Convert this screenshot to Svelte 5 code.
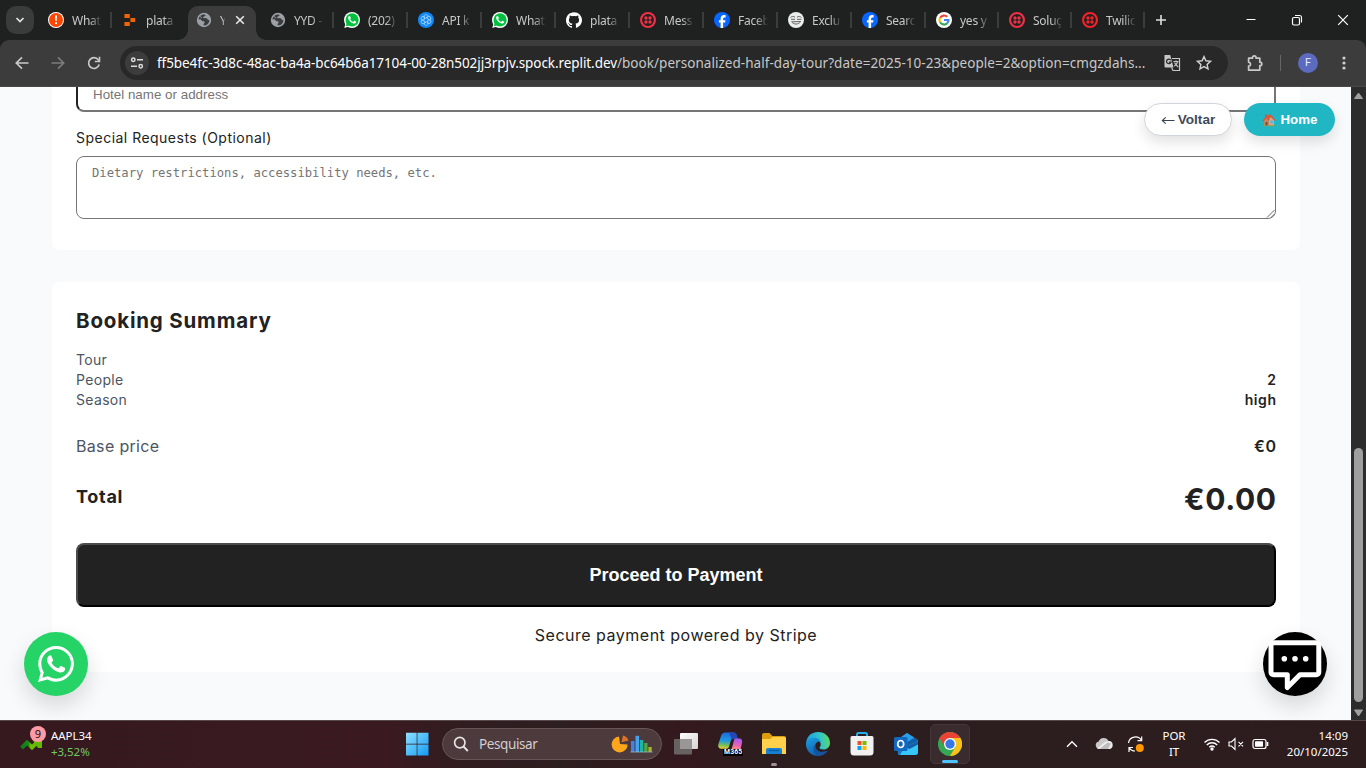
<script>
  const tabs = [
    { icon: 'alert', label: 'What', sep: true },
    { icon: 'replit', label: 'plata', sep: false },
    { icon: 'globe', label: 'Y', active: true },
    { icon: 'globe', label: 'YYD -', sep: true },
    { icon: 'whatsapp', label: '(202)', sep: true },
    { icon: 'openai', label: 'API k', sep: true },
    { icon: 'whatsapp', label: 'What', sep: true },
    { icon: 'github', label: 'plata', sep: true },
    { icon: 'twilio', label: 'Mess', sep: true },
    { icon: 'facebook', label: 'Faceb', sep: true },
    { icon: 'face', label: 'Exclu', sep: true },
    { icon: 'facebook', label: 'Searc', sep: true },
    { icon: 'google', label: 'yes y', sep: true },
    { icon: 'twilio', label: 'Soluç', sep: true },
    { icon: 'twilio2', label: 'Twilic', sep: true }
  ];
  const rows = [
    { name: 'Tour', value: '' },
    { name: 'People', value: '2' },
    { name: 'Season', value: 'high' }
  ];
  const wa =
    'M17.472 14.382c-.297-.149-1.758-.867-2.03-.967-.273-.099-.471-.148-.67.15-.197.297-.767.966-.94 1.164-.173.199-.347.223-.644.075-.297-.15-1.255-.463-2.39-1.475-.883-.788-1.48-1.761-1.653-2.059-.173-.297-.018-.458.13-.606.134-.133.298-.347.446-.52.149-.174.198-.298.298-.497.099-.198.05-.371-.025-.52-.075-.149-.669-1.612-.916-2.207-.242-.579-.487-.5-.669-.51-.173-.008-.371-.01-.57-.01-.198 0-.52.074-.792.372-.272.297-1.04 1.016-1.04 2.479 0 1.462 1.065 2.875 1.213 3.074.149.198 2.096 3.2 5.077 4.487.709.306 1.262.489 1.694.625.712.227 1.36.195 1.871.118.571-.085 1.758-.719 2.006-1.413.248-.694.248-1.289.173-1.413-.074-.124-.272-.198-.57-.347m-5.421 7.403h-.004a9.87 9.87 0 01-5.031-1.378l-.361-.214-3.741.982.998-3.648-.235-.374a9.86 9.86 0 01-1.51-5.26c.001-5.45 4.436-9.884 9.888-9.884 2.64 0 5.122 1.03 6.988 2.898a9.825 9.825 0 012.893 6.994c-.003 5.45-4.437 9.884-9.885 9.884m8.413-18.297A11.815 11.815 0 0012.05 0C5.495 0 .16 5.335.157 11.892c0 2.096.547 4.142 1.588 5.945L.057 24l6.305-1.654a11.882 11.882 0 005.683 1.448h.005c6.554 0 11.89-5.335 11.893-11.893a11.821 11.821 0 00-3.48-8.413z';
  const gh =
    'M12 .297c-6.63 0-12 5.373-12 12 0 5.303 3.438 9.8 8.205 11.385.6.113.82-.258.82-.577 0-.285-.01-1.04-.015-2.04-3.338.724-4.042-1.61-4.042-1.61C4.422 18.07 3.633 17.7 3.633 17.7c-1.087-.744.084-.729.084-.729 1.205.084 1.838 1.236 1.838 1.236 1.07 1.835 2.809 1.305 3.495.998.108-.776.417-1.305.76-1.605-2.665-.3-5.466-1.332-5.466-5.93 0-1.31.465-2.38 1.235-3.22-.135-.303-.54-1.523.105-3.176 0 0 1.005-.322 3.3 1.23.96-.267 1.98-.399 3-.405 1.02.006 2.04.138 3 .405 2.28-1.552 3.285-1.23 3.285-1.23.645 1.653.24 2.873.12 3.176.765.84 1.23 1.91 1.23 3.22 0 4.61-2.805 5.625-5.475 5.92.42.36.81 1.096.81 2.22 0 1.606-.015 2.896-.015 3.286 0 .315.21.69.825.57C20.565 22.092 24 17.592 24 12.297c0-6.627-5.373-12-12-12';
</script>

{#snippet favicon(kind)}
  <svg class="fav" viewBox="0 0 16 16">
    {#if kind === 'alert'}
      <circle cx="8" cy="8" r="8" fill="#fff" /><circle cx="8" cy="8" r="7" fill="#ff4500" />
      <path d="M7 3.600h2L8.700 9H7.300z" fill="#fff" /><circle cx="8" cy="11.200" r="1.100" fill="#fff" />
    {:else if kind === 'replit'}
      <path d="M3 2h4.800v4H3a.6.6 0 0 1-.6-.6V2.600A.6.6 0 0 1 3 2zM8.400 6h4.800v4H8.400zM3 10h4.800v4H3a.6.6 0 0 1-.6-.6v-2.800A.6.6 0 0 1 3 10z" fill="#f26207" />
    {:else if kind === 'globe'}
      <circle cx="8" cy="8" r="7.200" fill="#9aa0a6" />
      <path d="M8.500 2.600c1 .2 1.300.7.700 1.300-.7.600-1.700.4-2 1.200-.3.800.6 1.300 1.500 1.100 1.100-.2 2.200-.1 2.600.8.400 1 1.200 1.300 2 1 .2 2.800-2 5.300-4.900 5.500-.9 0-1-.8-.7-1.500.3-.9 1.200-1.200.9-2-.3-.8-1.500-.5-2.400-.9C5.200 8.600 5.300 7.600 4.300 7.300c-.7-.2-1.500 0-1.700.4C2.500 4.700 5.300 2.200 8.500 2.600z" fill="#3b3c3d" />
      <path d="M3.600 4.800c1.700-.5 1.300 1 2.500 1.100" stroke="#9aa0a6" fill="none" />
    {:else if kind === 'whatsapp'}
      <circle cx="8" cy="8" r="8" fill="#fff" /><path d="M.3 15.900l1.200-4.500 3.400 3.200z" fill="#fff" />
      <circle cx="8.100" cy="7.900" r="6.600" fill="#00c13d" /><path d="M1.800 14.300l.9-3.400 2.600 2.500z" fill="#00c13d" />
      <path transform="translate(.1 -.2) scale(.67)" d={wa.split('m-5.421')[0] + 'z'} fill="#fff" />
    {:else if kind === 'openai'}
      <circle cx="8" cy="8" r="8" fill="#1088f8" />
      <g fill="none" stroke="#b5deff" stroke-width=".7">
        {#each [0, 60, 120, 180, 240, 300] as a}
          <path transform="rotate({a} 8 8)" d="M8 6.200l2-1.200a2.100 2.100 0 0 0-3.900-1.300V8" />
        {/each}
      </g>
    {:else if kind === 'github'}
      <path transform="scale(.6667)" d={gh} fill="#fff" />
    {:else if kind === 'twilio' || kind === 'twilio2'}
      <g fill={kind === 'twilio' ? '#f22f46' : '#f5222d'}>
        <path fill-rule="evenodd" d="M8 0a8 8 0 1 1 0 16A8 8 0 0 1 8 0zm0 2.100a5.900 5.900 0 1 0 0 11.800A5.900 5.900 0 0 0 8 2.100z" />
        <circle cx="6" cy="6" r="1.700" /><circle cx="10" cy="6" r="1.700" /><circle cx="6" cy="10" r="1.700" /><circle cx="10" cy="10" r="1.700" />
      </g>
    {:else if kind === 'facebook'}
      <circle cx="8" cy="8" r="8" fill="#0866ff" />
      <path d="M6.600 15.900v-5.300H4.900V8.200h1.700V7.100c0-2.800 1.300-4 3.600-4 .5 0 1.100.1 1.400.2v2.100h-.9c-1.200 0-1.600.5-1.600 1.700v1.100h2.400l-.4 2.400h-2v5.300z" fill="#fff" />
    {:else if kind === 'face'}
      <circle cx="8" cy="8" r="8" fill="#ececec" />
      <path d="M2.500 5.500c1-1 3-1.500 4.500-.3M9 5.200c1.500-1.200 3.500-.7 4.500.3M3 7.300h4M9 7.300h4.500M3.800 10c2.500 2.800 6 2.800 8.700-.2M3.500 9.800l9.300-.3" fill="none" stroke="#555" stroke-width=".9" />
    {:else if kind === 'google'}
      <circle cx="8" cy="8" r="8" fill="#fff" />
      <g fill="none" stroke-width="2.200">
        <path d="M11.200 4.800A4.500 4.500 0 0 0 4.100 5.800" stroke="#ea4335" />
        <path d="M4.100 5.800a4.500 4.500 0 0 0 0 4.500" stroke="#fbbc05" />
        <path d="M4.100 10.200a4.500 4.500 0 0 0 6.900 1.200" stroke="#34a853" />
        <path d="M8 8h4.500c0 1.500-.6 2.600-1.500 3.400" stroke="#4285f4" />
      </g>
    {/if}
  </svg>
{/snippet}

<div class="screen">
  <header class="tabstrip">
    <div class="tabsearch"><svg width="10" height="10" viewBox="0 0 10 10"><path d="M1.500 3L5 6.600 8.500 3" fill="none" stroke="#e3e3e3" stroke-width="1.700" /></svg></div>
    <div class="tabs">
      {#each tabs as t}
        <div class="tab" class:active={t.active} class:sep={t.sep}>
          {@render favicon(t.icon)}
          <span class="tablabel">{t.label}</span>
          {#if t.active}
            <svg class="close" width="10" height="10" viewBox="0 0 10 10"><path d="M1.200 1.200l7.600 7.600M8.800 1.200L1.200 8.800" stroke="#e8e8e8" stroke-width="1.600" /></svg>
          {/if}
        </div>
      {/each}
    </div>
    <svg class="plus" width="12" height="12" viewBox="0 0 12 12"><path d="M6 1v10M1 6h10" stroke="#dedede" stroke-width="1.600" /></svg>
    <div class="winctl">
      <svg width="12" height="12" viewBox="0 0 12 12"><path d="M1.500 5.500h9" stroke="#fff" /></svg>
      <svg width="12" height="12" viewBox="0 0 12 12"><rect x="1.500" y="3.500" width="7" height="7.500" rx="1.500" fill="none" stroke="#fff" stroke-width="1.200" /><path d="M4 1.500h4.500a2 2 0 0 1 2 2v5" fill="none" stroke="#fff" stroke-width="1.100" /></svg>
      <svg width="12" height="12" viewBox="0 0 12 12"><path d="M1.200 1.200l9.600 9.600M10.800 1.200L1.200 10.800" stroke="#fff" stroke-width="1.200" /></svg>
    </div>
  </header>

  <div class="toolbar-wrap">
    <div class="toolbar">
      <svg class="nav" viewBox="0 0 16 16"><path d="M14.500 8H2.500M8 2.300L2.300 8 8 13.700" fill="none" stroke="#c9c9c9" stroke-width="1.700" /></svg>
      <svg class="nav" viewBox="0 0 16 16"><path d="M1.500 8h12M8 2.300L13.700 8 8 13.700" fill="none" stroke="#7b7b7b" stroke-width="1.700" /></svg>
      <svg class="nav" viewBox="0 0 16 16"><path d="M13.200 9.600A5.400 5.400 0 1 1 12.300 4.800L13.500 6" fill="none" stroke="#c9c9c9" stroke-width="1.700" /><path d="M13.500 1.800v4.700H8.800" fill="none" stroke="#c9c9c9" stroke-width="1.600" /></svg>
      <div class="url">
        <div class="site"><svg width="14" height="14" viewBox="0 0 14 14" fill="none" stroke="#dcdcdc" stroke-width="1.500"><circle cx="3.300" cy="3.800" r="1.700" /><path d="M7 3.800h6M1 10.200h6" /><circle cx="10.700" cy="10.200" r="1.700" /></svg></div>
        <span class="address"><b>ff5be4fc-3d8c-48ac-ba4a-bc64b6a17104-00-28n502jj3rpjv.spock.replit.dev</b>/book/personalized-half-day-tour?date=2025-10-23&amp;people=2&amp;option=cmgzdahs...</span>
        <svg class="translate" width="18" height="18" viewBox="0 0 18 18">
          <path d="M1.500 1h5.700l3.300 12.500H2.500a1 1 0 0 1-1-1z" fill="#c7c7c7" />
          <path d="M9 4.500h7.500v12H10l-1.500-3" fill="none" stroke="#c7c7c7" stroke-width="1.200" />
          <path d="M7.800 6.200A2.300 2.300 0 1 0 8 8.200H5.900" fill="none" stroke="#282828" stroke-width="1.200" />
          <path d="M10.500 7.500h5M13 6.500v1M14.700 7.500c-.5 2-1.900 3.600-3.500 4.600M11.500 8.500c.8 1.900 2 3.200 3.700 4.500" fill="none" stroke="#c7c7c7" stroke-width="1.100" />
        </svg>
        <svg class="star" width="16" height="16" viewBox="0 0 16 16"><path d="M8 1.600l1.900 4.200 4.600.5-3.400 3.100.9 4.500L8 11.600l-4 2.300.9-4.500L1.500 6.300l4.600-.5z" fill="none" stroke="#d0d0d0" stroke-width="1.400" /></svg>
      </div>
      <svg class="ext" width="18" height="18" viewBox="0 0 18 18"><path d="M2.600 4.200h3.900c0-3 3.600-3 3.600 0h3.700v4c2.700 0 2.700 3.400 0 3.400v4.500H2.600v-3.900c2.600-.4 2.600-3.600 0-4z" fill="none" stroke="#c9c9c9" stroke-width="1.700" stroke-linejoin="round" /></svg>
      <i class="divider"></i>
      <div class="avatar">F</div>
      <svg class="menu" width="4" height="16" viewBox="0 0 4 16" fill="#cfcfcf"><circle cx="2" cy="3" r="1.600" /><circle cx="2" cy="8" r="1.600" /><circle cx="2" cy="13" r="1.600" /></svg>
    </div>
  </div>

  <div class="viewport">
    <main class="page">
      <section class="card details">
        <div class="hotel"><span>Hotel name or address</span></div>
        <div class="label"><span>Special Requests (Optional)</span></div>
        <div class="area">
          <span>Dietary restrictions, accessibility needs, etc.</span>
          <svg class="grip" width="9" height="9" viewBox="0 0 9 9"><path d="M1 8.500L8.500 1M5 8.500L8.500 5" stroke="#666" stroke-width="1" /></svg>
        </div>
      </section>
      <section class="card summary">
        <h2><span>Booking Summary</span></h2>
        <div class="rows">
          {#each rows as r}
            <div class="row"><span class="name">{r.name}</span><b>{r.value}</b></div>
          {/each}
        </div>
        <div class="row base"><span class="name">Base price</span><b>€0</b></div>
        <div class="row total"><strong>Total</strong><b>€0.00</b></div>
        <div class="pay"><span>Proceed to Payment</span></div>
        <p class="secure"><span>Secure payment powered by Stripe</span></p>
      </section>
      <div class="floating">
        <div class="pill voltar">
          <svg width="14" height="10" viewBox="0 0 14 10"><path d="M13.500 5.500H1.500M4.700 2.300L1.300 5.500l3.400 3.200" fill="none" stroke="#374151" stroke-width="1.100" /></svg>
          <span>Voltar</span>
        </div>
        <div class="pill home">
          <svg width="14" height="14" viewBox="0 0 14 14"><path d="M2.500 6.500L7.500 3l4.500 4v6H2.500z" fill="#d8a683" /><path d="M2 7.500l2.500-3.500L7 7.500V13H2z" fill="#c08763" /><path d="M3 1.500h2v3H3z" fill="#9a6b4f" /><path d="M.4 7.600L5 2.300 9 1.600l4.600 5.600-1.300.5-3.400-3.900L6.500 8 4.700 5.200 1.500 8.500z" fill="#d9583c" /><path d="M3.500 9h2v4h-2z" fill="#7a4b39" /><path d="M8.300 7.600h2.800v2.800H8.300z" fill="#58b7e6" /><path d="M1 12.300h12.300v1H1z" fill="#8f9a52" /></svg>
          <span>Home</span>
        </div>
      </div>
      <div class="fab wa"><svg width="36" height="36" viewBox="0 0 24 24"><path d={wa} fill="#fff" /></svg></div>
      <div class="fab chat">
        <svg width="64" height="64" viewBox="0 0 64 64"><path d="M10.500 10.800h42.800a2.500 2.500 0 0 1 2.500 2.500v27a2.500 2.500 0 0 1-2.500 2.500H37L24.300 55.500V42.800H10.500A2.500 2.500 0 0 1 8 40.300v-27a2.500 2.500 0 0 1 2.500-2.500z" fill="none" stroke="#fff" stroke-width="5" stroke-linejoin="round" /><g fill="#fff"><circle cx="21.300" cy="26.700" r="2.800" /><circle cx="32" cy="26.700" r="2.800" /><circle cx="42.700" cy="26.700" r="2.800" /></g></svg>
      </div>
    </main>
    <aside class="scroll">
      <svg width="11" height="8" viewBox="0 0 11 8"><path d="M5.500 1L9.500 6.500h-8z" fill="#9f9f9f" stroke="#9f9f9f" stroke-linejoin="round" /></svg>
      <div class="thumb"></div>
      <svg width="11" height="8" viewBox="0 0 11 8"><path d="M5.500 7L1.500 1h8z" fill="#9f9f9f" stroke="#9f9f9f" stroke-linejoin="round" /></svg>
    </aside>
  </div>

  <footer class="taskbar">
    <div class="widget">
      <div class="trend">
        <svg width="24" height="14" viewBox="0 0 24 14"><defs><linearGradient id="tg"><stop offset="0" stop-color="#117a1c" /><stop offset=".45" stop-color="#179014" /><stop offset=".5" stop-color="#6abf00" /><stop offset="1" stop-color="#5fb800" /></linearGradient></defs><path d="M1.500 11L7 5.500l5 5 6.500-6.500" fill="none" stroke="url(#tg)" stroke-width="4" /><path d="M12 2h10v9h-4z" fill="#62ba05" /></svg>
        <span class="badge">9</span>
      </div>
      <div class="quote"><span>AAPL34</span><span class="up">+3,52%</span></div>
    </div>
    <div class="apps">
      <div class="app start">
        <svg width="24" height="24" viewBox="0 0 24 24"><defs><linearGradient id="win" x1="0" y1="0" x2="1" y2="1"><stop offset="0" stop-color="#8fe0ff" /><stop offset="1" stop-color="#119bf5" /></linearGradient></defs><path d="M1 .8h10.700v11H1zM12.400.8H23.500v11H12.400zM1 12.600h10.700V23.500H1zM12.400 12.600H23.500V23.500H12.400z" fill="url(#win)" /></svg>
      </div>
      <div class="search">
        <svg width="16" height="16" viewBox="0 0 16 16"><circle cx="6.800" cy="6.600" r="5.200" fill="none" stroke="#e8e2e3" stroke-width="1.700" /><path d="M10.500 10.500l4.300 4.500" stroke="#e8e2e3" stroke-width="1.900" /></svg>
        <span>Pesquisar</span>
        <svg width="42" height="20" viewBox="0 0 42 20">
          <path d="M8 2.500a8 8 0 1 0 8.600 8L9 10z" fill="#fca61c" /><path d="M10.500 8.200l1.500-6.600c3 .6 5 2.800 5.500 5z" fill="#d8742a" />
          <path d="M20 7h3.500v11H20z" fill="#3f83e8" /><path d="M24.500 1.800h3.600V18h-3.600z" fill="#45a2ee" /><path d="M29 6h3.300v12H29z" fill="#1fb3a3" /><path d="M33.200 9h3.300v9h-3.300z" fill="#4aab48" /><path d="M37.400 13h3.300v5h-3.300z" fill="#a4b728" /><path d="M19.500 18h22" stroke="#9db7c9" stroke-width=".8" />
        </svg>
      </div>
      <div class="app"><svg width="26" height="24" viewBox="0 0 26 24"><defs><linearGradient id="tv" x1="0" y1="0" x2="1" y2="1"><stop offset="0" stop-color="#fff" /><stop offset="1" stop-color="#d5d2d2" /></linearGradient></defs><rect x="7" y="1" width="18" height="16" rx="1" fill="url(#tv)" /><rect x="1" y="7" width="18" height="15.500" rx="1" fill="#6c6767" opacity=".93" /><path d="M7 7h12v10H7z" fill="#999696" /></svg></div>
      <div class="app copilot">
        <svg width="26" height="26" viewBox="0 0 26 26"><defs><linearGradient id="ca" x1=".3" y1="0" x2=".2" y2="1"><stop offset="0" stop-color="#1d6be0" /><stop offset=".5" stop-color="#1f9be0" /><stop offset=".75" stop-color="#6fbb5f" /><stop offset="1" stop-color="#e8d030" /></linearGradient><linearGradient id="cb" x1=".6" y1="0" x2=".4" y2="1"><stop offset="0" stop-color="#a15cf2" /><stop offset=".5" stop-color="#e560b8" /><stop offset="1" stop-color="#ff9a66" /></linearGradient></defs>
          <path d="M8.500 1.500h8c2 0 2.800 1.400 3.200 3l.8 3h-3.700c-2 0-2.700 1-3.200 2.800l-1.400 4.900c-.7 2.100-1.700 2.600-3.700 2.600H4.500c-2.500 0-3.800-1.800-3.200-4.200L4 5c.7-2.300 2-3.500 4.500-3.500z" fill="url(#ca)" /><path d="M12 1.500h4.500c2.200 0 2.800 1.400 3.200 3l.8 3h-3.700c-1 0-1.700.3-2.200.8z" fill="#2547b8" /><path d="M18.500 7.500h3.700c2.500 0 3.400 1.800 2.800 4.200l-1.800 8.100H13c1.500-.6 1.800-2 2.200-3.500l1.600-6.200c.3-1.200.7-2 1.700-2.600z" fill="url(#cb)" /></svg>
        <span class="m365">M365</span>
      </div>
      <div class="app running"><svg width="26" height="24" viewBox="0 0 26 24"><path d="M1 3a2 2 0 0 1 2-2h5.500l3 3H23a2 2 0 0 1 2 2v3H1z" fill="#dc9d0c" /><path d="M1 7h8l2.500-2H23.500A1.500 1.500 0 0 1 25 6.500V22H1z" fill="#ffd04b" /><path d="M5 22v-4a2 2 0 0 1 2-2h12a2 2 0 0 1 2 2v4z" fill="#1681d0" /><path d="M8 18.500h10" stroke="#075ca4" stroke-width="1.300" /></svg></div>
      <div class="app"><svg width="26" height="26" viewBox="0 0 26 26"><defs><linearGradient id="ea" x1="0" y1=".3" x2="1" y2=".2"><stop offset="0" stop-color="#1b9de2" /><stop offset=".6" stop-color="#33c6c5" /><stop offset="1" stop-color="#63d957" /></linearGradient><linearGradient id="eb" x1="0" y1="0" x2=".6" y2="1"><stop offset="0" stop-color="#1ba0e1" /><stop offset="1" stop-color="#0e58ab" /></linearGradient></defs><path d="M1.200 11C2.200 4.500 7 1 13 1c7 0 12 4.700 12 11 0 4-2.800 6.500-6.500 6.500-2.500 0-4-.8-4-1.700 0-.8 1.200-1.200 1.200-3.400 0-2.600-2-4.900-5.400-4.900-4.300 0-7.500 2-9.100 2.500z" fill="url(#ea)" /><path d="M1.200 11c2-3 5-4.200 8-4.200 4 0 6 2.500 6.400 4.500-1.500-1-3.800-.4-4.700 1.200-2 3.400.7 8.600 6 8.500 2.600 0 4.400-.7 6.300-1.700-2.300 3.500-6 5.700-10.200 5.700C6 25 1 19.500 1 13z" fill="url(#eb)" /><path d="M10.900 12.500c-2 3.400.7 8.600 6 8.500 2.600 0 4.400-.7 6.300-1.700-2 3-5.400 5.300-9.200 5.600-5-1-7.600-7.600-3.100-12.400z" fill="#15539c" /></svg></div>
      <div class="app"><svg width="24" height="26" viewBox="0 0 24 26"><path d="M7 6V3.500C7 2.500 7.500 2 8.500 2h7c1 0 1.500.5 1.500 1.500V6" fill="none" stroke="#27aee8" stroke-width="2" /><path d="M2 5h20a1.500 1.500 0 0 1 1.500 1.500V21a3.500 3.500 0 0 1-3.500 3.500H4A3.500 3.500 0 0 1 .5 21V6.500A1.500 1.500 0 0 1 2 5z" fill="#f1f1f1" /><path d="M7.500 10h4v4h-4z" fill="#f25022" /><path d="M12.500 10h4v4h-4z" fill="#7fba00" /><path d="M7.500 15h4v4h-4z" fill="#00a4ef" /><path d="M12.500 15h4v4h-4z" fill="#ffb900" /></svg></div>
      <div class="app"><svg width="26" height="24" viewBox="0 0 26 24"><path d="M4 8l10-7 11 7v12a3 3 0 0 1-3 3H5z" fill="#1677c9" /><path d="M6 6.500L14 1l7 4.500L11 12z" fill="#2d9fe6" /><path d="M10 13L22 6l3 2-9 9z" fill="#135ea8" /><path d="M12 14.500L25 9.500V20a3 3 0 0 1-3 3H7z" fill="#36c6f7" /><path d="M12 14.500L25 9.500v3L16.500 17z" fill="#135ea8" /><rect x="1" y="5" width="13.500" height="14" rx="1.500" fill="#1068bf" /><ellipse cx="7.700" cy="12" rx="3" ry="3.500" fill="none" stroke="#fff" stroke-width="1.700" /></svg></div>
      <div class="app current"><svg width="24" height="24" viewBox="0 0 24 24"><circle cx="12" cy="12" r="12" fill="#34a853" /><path d="M12 24A12 12 0 0 0 22.400 6H12l5.200 9z" fill="#fbc116" /><path d="M1.600 6A12 12 0 0 1 22.400 6H12L6.800 15z" fill="#ea4335" /><circle cx="12" cy="12" r="6" fill="#fff" /><circle cx="12" cy="12" r="4.700" fill="#3577e8" /></svg></div>
    </div>
    <div class="tray">
      <div class="slot"><svg width="12" height="8" viewBox="0 0 12 8"><path d="M1 6.800L6 1.800l5 5" fill="none" stroke="#fff" stroke-width="1.400" /></svg></div>
      <div class="slot"><svg width="18" height="13" viewBox="0 0 18 13"><path d="M4.500 12a3.800 3.800 0 0 1-.8-7.500A5.300 5.300 0 0 1 13.500 4a4 4 0 0 1 .5 8z" fill="#c9c9c9" /><path d="M2 11.500L10 5l3.500-.9a4 4 0 0 1 .5 7.900H4.500z" fill="#ededed" /><path d="M4.500 12l8-6.500 3.500 1-3 5.500z" fill="#bdbdbd" /></svg></div>
      <div class="slot"><svg width="18" height="18" viewBox="0 0 18 18"><path d="M1.500 8A7 7 0 0 1 14.500 5.500M10.500 5.700h4.200V1.500M6 12.500H2V17M2 12.800c1.500 2 3.500 3.200 6 3.200" fill="none" stroke="#fff" stroke-width="1.200" /><circle cx="12.800" cy="13" r="4" fill="#ff9800" /></svg></div>
      <div class="lang"><span>POR</span><span>IT</span></div>
      <div class="status"><svg width="18" height="14" viewBox="0 0 18 14" fill="none" stroke="#fff" stroke-width="1.400"><path d="M1.500 5.500a10.500 10.500 0 0 1 15 0M3.800 8a7.300 7.300 0 0 1 10.400 0M6.300 10.300a4 4 0 0 1 5.400 0" /><circle cx="9" cy="12" r="1" fill="#fff" /></svg></div>
      <div class="status"><svg width="16" height="14" viewBox="0 0 16 14" fill="none" stroke="#fff" stroke-width="1.100"><path d="M1 5h2.500L7 1.500v11L3.500 9H1zM10.500 4.800l4.500 4.500M15 4.800l-4.500 4.500" /></svg></div>
      <div class="status wide"><svg width="17" height="12" viewBox="0 0 17 12"><rect x="1" y="1.500" width="13" height="9" rx="2" fill="none" stroke="#fff" stroke-width="1.200" /><rect x="3" y="3.300" width="8" height="5.400" rx=".8" fill="#fff" /><path d="M15.500 4v4" stroke="#fff" stroke-width="1.700" /></svg></div>
      <div class="clock"><span>14:09</span><span>20/10/2025</span></div>
    </div>
  </footer>
</div>

<style>
  :global(body) { margin: 0; overflow: hidden; }
  .screen { width: 1366px; height: 768px; display: flex; flex-direction: column; overflow: hidden; font-family: "Noto Sans", sans-serif; }
  .screen * { box-sizing: border-box; }
  svg { display: block; flex: none; }
  span { white-space: nowrap; }

  .tabstrip { height: 40px; flex: none; display: flex; align-items: center; background: #1f2120; }
  .tabsearch { width: 28px; height: 28px; margin: 0 4px 0 6px; border-radius: 10px; background: #3a3b3b; display: grid; place-items: center; }
  .tabs { display: flex; height: 40px; width: 1107px; }
  .tab { position: relative; flex: 0 0 74px; display: flex; align-items: center; padding-left: 10px; color: #c7c7c7; font-size: 12px; }
  .tab:nth-child(n + 13) { flex-basis: 73px; }
  .fav { width: 16px; height: 16px; }
  .tablabel { width: 30px; margin-left: 8px; letter-spacing: -.25px; -webkit-mask-image: linear-gradient(90deg, #000 60%, transparent); mask-image: linear-gradient(90deg, #000 60%, transparent); }
  .sep::after { content: ""; position: absolute; right: 0; top: 12px; width: 2px; height: 16px; background: #3b3d3d; }
  .tab.active { flex: 0 0 68px; height: 34px; margin: 6px 4px 0 2px; padding: 0 0 6px 8px; border-radius: 10px 10px 0 0; background: #3c3c3c; }
  .active::before, .active::after { content: ""; position: absolute; bottom: 0; width: 10px; height: 10px; }
  .active::before { left: -10px; background: radial-gradient(circle at 0 0, transparent 9.500px, #3c3c3c 10px); }
  .active::after { right: -10px; background: radial-gradient(circle at 100% 0, transparent 9.500px, #3c3c3c 10px); }
  .active .tablabel { width: 5px; }
  .close { margin-left: 10px; }
  .plus { margin-left: 10px; }
  .winctl { margin-left: auto; display: flex; gap: 34px; padding-right: 17px; }

  .toolbar-wrap { height: 47px; flex: none; background: #1f2120; }
  .toolbar { height: 47px; display: flex; align-items: center; padding: 0 20px 0 14px; border-radius: 9px 9px 0 0; background: #3c3c3c; border-bottom: 1px solid #494949; }
  .nav { width: 16px; height: 16px; margin-right: 20px; }
  .nav:nth-child(3) { margin-right: 18px; }
  .url { width: 1108px; height: 34px; flex: none; display: flex; align-items: center; padding-left: 5px; border-radius: 17px; background: #282828; }
  .site { width: 24px; height: 24px; border-radius: 50%; background: #3c3c3c; display: grid; place-items: center; }
  .address { width: 994px; flex: none; margin-left: 8px; color: #c7c7c7; font-size: 13.500px; letter-spacing: .04px; }
  .address b { color: #fff; font-weight: 400; letter-spacing: -.072px; }
  .translate { margin-left: 12px; }
  .star { margin-left: 15px; }
  .ext { margin-left: 18px; }
  .divider { width: 1px; height: 16px; margin-left: 16px; background: #666; }
  .avatar { width: 20px; height: 20px; margin-left: 17px; border-radius: 50%; background: #5c6bc0; color: #e8eaf6; font: 11px/20px Roboto, sans-serif; text-align: center; }
  .menu { margin-left: 24px; }

  .viewport { height: 633px; flex: none; display: flex; }
  .page { position: relative; flex: 1; overflow: hidden; padding: 0 51px 0 52px; background: #f9fafc; }
  .card { background: #fff; padding: 0 24px; color: #222; font-family: Inter, sans-serif; }
  .details { height: 163px; border-radius: 0 0 8px 8px; margin-bottom: 32px; }
  .hotel { height: 25px; border: 2px solid #767676; border-top: 0; border-left-color: #222; border-radius: 0 0 8px 8px; padding: 0 15px; color: #757575; font: 13.333px/15px "Liberation Sans", Arial, sans-serif; letter-spacing: .02px; }
  .label { height: 20px; margin: 16px 0 8px; font-size: 14px; line-height: 20px; letter-spacing: .48px; }
  .area { height: 63px; position: relative; border: 1px solid #767676; border-radius: 8px; padding: 8px 15px; color: #757575; font: 12.190px/16px "DejaVu Sans Mono", monospace; }
  .grip { position: absolute; right: 0; bottom: 0; }
  .summary { height: 390px; border-radius: 8px 8px 0 0; padding-top: 24px; }
  h2 { margin: 0 0 14px; font: 700 20.500px/29px Inter, sans-serif; letter-spacing: .82px; }
  .row { display: flex; justify-content: space-between; align-items: center; height: 20px; font-size: 14px; }
  .row b { font-weight: 600; letter-spacing: .6px; margin-right: -.6px; }
  .name { color: #4b5563; letter-spacing: .33px; }
  .base { height: 24px; margin-top: 25px; font-size: 16px; }
  .total { height: 36px; margin-top: 24px; align-items: flex-start; font-size: 18px; line-height: 29px; }
  .total strong { font-weight: 700; letter-spacing: .7px; }
  .total b { font-size: 30px; line-height: 34px; font-weight: 700; }
  .pay { height: 64px; margin-top: 25px; border: 2px solid #000; border-top-color: #4b4b4b; border-left-color: #4b4b4b; border-radius: 8px; background: #222; color: #fff; display: grid; place-items: center; font: 700 18px/20px "Liberation Sans", Arial, sans-serif; }
  .secure { margin: 16px 0 0; text-align: center; font-size: 16px; line-height: 24px; letter-spacing: .5px; }
  .floating { position: absolute; right: 16px; top: 16px; display: flex; gap: 12px; }
  .pill { height: 33px; border-radius: 17px; display: flex; align-items: center; justify-content: center; font: 700 13.600px/20px "Liberation Sans", Arial, sans-serif; box-shadow: 0 6px 14px rgba(0, 0, 0, .12); }
  .voltar { width: 88px; border: 1px solid #d1d5db; background: #fff; color: #414a59; gap: 3px; }
  .home { width: 91px; background: #20b6c4; color: #fff; gap: 5px; font-size: 13.300px; }
  .fab { position: absolute; top: 545px; width: 64px; height: 64px; border-radius: 50%; display: grid; place-items: center; overflow: visible; box-shadow: 0 10px 22px rgba(0, 0, 0, .14); }
  .wa { left: 24px; background: #25d366; }
  .chat { right: 24px; background: #000; }
  .scroll { width: 15px; display: flex; flex-direction: column; align-items: center; background: #2c2c2c; padding: 5px 0 3px; }
  .thumb { width: 9px; height: 254px; margin: auto 0 7px; border-radius: 5px; background: #9f9f9f; }

  .taskbar { height: 48px; flex: none; display: grid; grid-template-columns: 395px 1fr 310px; align-items: center; padding-bottom: 2px; border-top: 1px solid #57484c; background: linear-gradient(90deg, #35191f 0, #3a1a20 390px, #301d20 470px, #2d1e20 560px, #34191e 690px, #2c1e1f 770px, #2c1e1f 1000px, #2d1c1e 100%); color: #fff; font-size: 12px; }
  .widget { display: flex; align-items: center; padding-left: 20px; }
  .trend { position: relative; width: 24px; }
  .badge { position: absolute; left: 10px; top: -11px; width: 16px; height: 16px; border-radius: 50%; background: #ff99a4; color: #111; font-size: 11px; line-height: 16px; text-align: center; }
  .quote { display: flex; flex-direction: column; margin-left: 7px; line-height: 16px; font-size: 11.500px; letter-spacing: -.05px; }
  .up { color: #6ccb5f; }
  .apps { display: flex; align-items: center; height: 45px; }
  .app { position: relative; width: 44px; height: 40px; display: grid; place-items: center; }
  .start { width: 44px; margin-right: 3px; }
  .search { width: 220px; height: 32px; margin-right: 2px; display: flex; align-items: center; padding: 0 8px 0 10px; border: 1px solid #675558; border-radius: 16px; background: #4c3a3d; color: #d6cdce; font-size: 13.500px; }
  .search span { margin: 0 auto 0 10px; letter-spacing: -.4px; }
  .m365 { position: absolute; left: 15px; top: 25px; padding: 0 1px; background: #000; color: #fff; font: 700 6.800px/7px Roboto, sans-serif; letter-spacing: .2px; }
  .running::after, .current::after { content: ""; position: absolute; left: 19px; bottom: -2px; width: 6px; height: 3px; border-radius: 2px; background: #9d9495; }
  .current { width: 40px; margin-left: 2px; border: 1px solid #453739; border-radius: 5px; background: #3a2c2e; }
  .current::after { left: 11px; width: 16px; background: #4cc2ff; bottom: 0; }
  .tray { display: flex; align-items: center; line-height: 16px; }
  .slot { width: 32px; display: grid; place-items: center; }
  .lang { width: 44px; display: flex; flex-direction: column; align-items: center; font-size: 11.500px; letter-spacing: -.1px; margin-right: 4px; }
  .status { width: 24px; display: grid; place-items: center; }
  .status.wide { width: 25px; }
  .clock { flex: 1; display: flex; flex-direction: column; align-items: flex-end; padding-right: 18px; font-size: 11.500px; letter-spacing: 0; }
</style>
